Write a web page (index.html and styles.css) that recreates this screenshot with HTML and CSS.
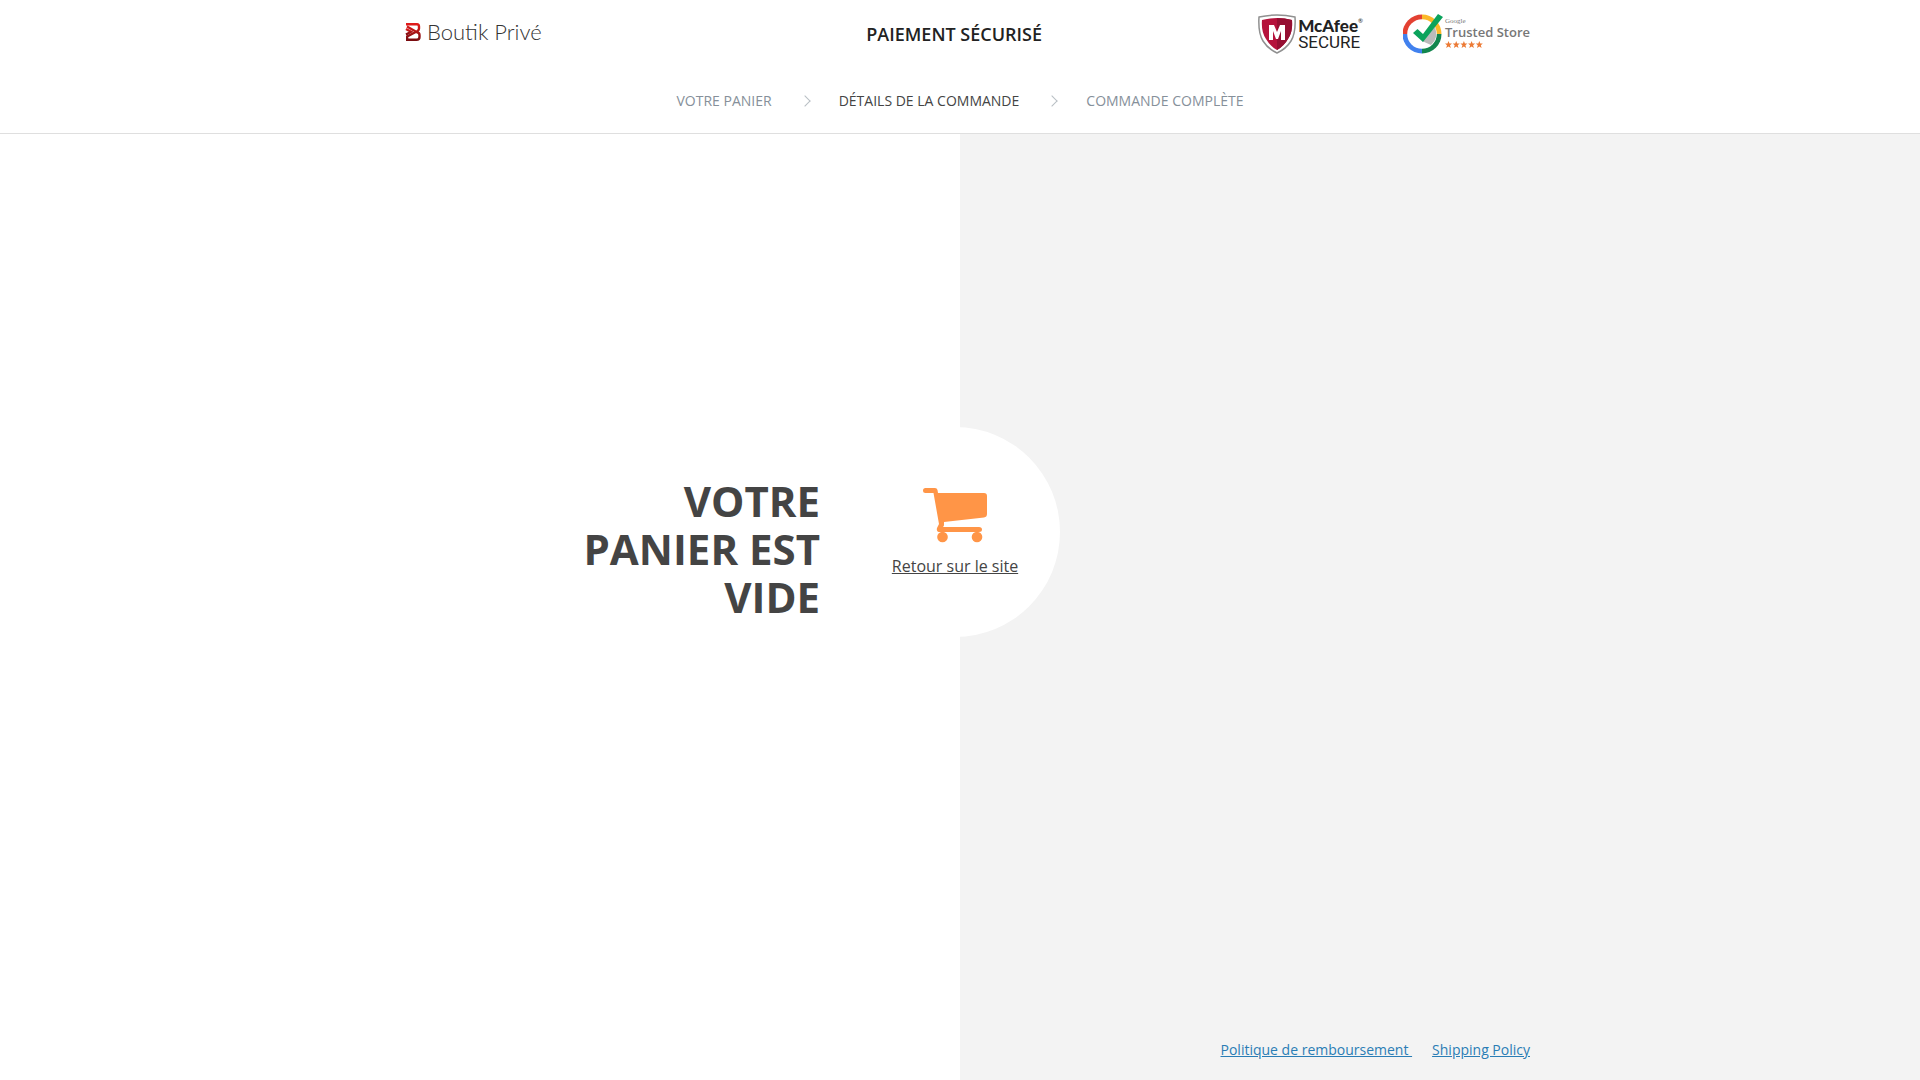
FILE: index.html
```html
<!DOCTYPE html>
<html lang="fr">
<head>
<meta charset="utf-8">
<meta name="viewport" content="width=device-width, initial-scale=1">
<title>Boutik Privé - Paiement sécurisé</title>
<link rel="stylesheet" href="styles.css">
</head>
<body>
<header class="header">
  <div class="container header-top">
    <a class="logo" href="#">
      <svg class="logo-mark" viewBox="0 0 16 20" aria-hidden="true">
        <defs><linearGradient id="red" x1="0" y1="0" x2="0" y2="1"><stop offset="0" stop-color="#e01b1b"/><stop offset="1" stop-color="#7a0c10"/></linearGradient></defs>
        <g fill="none" stroke="url(#red)" stroke-width="2.400">
          <path d="M1 2.200H12Q14 2.200 14 4.500V6.500Q14 8 12.500 9L2.200 14.500V17.800H11.500Q14.500 17.800 14.500 15V13Q14.500 10.500 12 10.200L2 4.500"/>
          <path d="M1 7L6 9.800L1 12.500"/>
        </g>
      </svg>
      <span>Boutik Privé</span>
    </a>
    <h1 class="title">PAIEMENT SÉCURISÉ</h1>
    <div class="badges">
      <div class="badge">
        <svg class="shield" viewBox="0 0 38 40" aria-hidden="true">
          <path d="M1 3Q19-1 37 3Q38 19 33 27Q28 35 19 39Q10 35 5 27Q0 19 1 3Z" fill="#fff" stroke="#909090" stroke-width="1.500"/>
          <path d="M4 6Q19 2 34 6Q35 18 30 25Q26 32 19 36Q12 32 8 25Q3 18 4 6Z" fill="#b5123b"/>
          <path d="M19 4Q27 4 34 6Q35 18 30 25Q26 32 19 36Z" fill="#950f32"/>
          <path d="M11 26V11H16L19 18L22 11H27V26H23V17L20 25H18L15 17V26Z" fill="#fff"/>
        </svg>
        <div class="mcafee"><span class="mcafee-name">McAfee<small>®</small></span><span>SECURE</span></div>
      </div>
      <div class="badge">
        <svg class="trust-mark" viewBox="1 0 40 40" aria-hidden="true">
          <path d="M20 .500A19.500 19.500 0 0 1 39.500 20H20Z" fill="#fbb829"/>
          <path d="M39.500 20A19.500 19.500 0 0 1 20 39.500V20Z" fill="#12864e"/>
          <path d="M20 39.500A19.500 19.500 0 0 1 .500 20H20Z" fill="#4181ee"/>
          <path d="M.500 20A19.500 19.500 0 0 1 20 .500V20Z" fill="#e34132"/>
          <circle cx="20" cy="20" r="14.800" fill="#fff"/>
          <path d="M20 27L33 13Q37 24 29 31Z" fill="#bbb"/>
          <path d="M11 19L15.500 15L21 20L36 0L41 3L21 28Z" fill="#0ba35c"/>
        </svg>
        <div class="trust"><small>Google</small><span class="trust-name">Trusted Store</span>
          <svg class="stars" viewBox="0 0 38 7" aria-label="5 étoiles">
            <defs><path id="star" d="M3.500 0L4.500 2.500H7L5 4.200L5.800 7L3.500 5.400L1.200 7L2 4.200L0 2.500H2.500Z"/></defs>
            <g fill="#ec7a35"><use href="#star"/><use href="#star" x="7.700"/><use href="#star" x="15.400"/><use href="#star" x="23.100"/><use href="#star" x="30.800"/></g>
          </svg>
        </div>
      </div>
    </div>
  </div>
  <ol class="steps">
    <li>VOTRE PANIER</li>
    <li class="current">DÉTAILS DE LA COMMANDE</li>
    <li>COMMANDE COMPLÈTE</li>
  </ol>
</header>
<main class="main">
  <section class="empty">
    <h2 class="empty-title">VOTRE PANIER EST VIDE</h2>
    <div class="circle">
      <svg class="cart" viewBox="0 0 66 56" aria-hidden="true" fill="#ff9547">
        <path d="M3.500 1H13Q15 1 15.500 3L16 6H62Q65 6 65 9V27Q65 30 62 30.500L22 35V38Q22 39 21 40H57Q60 40 60 42.500T57 45H18Q14 45 15 41L17 37L11.500 6H3.500Q1 6 1 3.500T3.500 1Z"/>
        <circle cx="20.500" cy="50" r="5.300"/><circle cx="55" cy="50" r="5.300"/>
      </svg>
      <a class="back" href="#">Retour sur le site</a>
    </div>
  </section>
  <footer class="container footer">
    <a href="#">Politique de remboursement&nbsp;</a>
    <a href="#">Shipping Policy</a>
  </footer>
</main>
</body>
</html>
```
FILE: styles.css
```css
* { box-sizing: border-box; }

body {
  display: flex;
  flex-direction: column;
  min-height: 100vh;
  margin: 0;
  background: #fff;
  color: #444;
  font: 14px/20px "Open Sans", sans-serif;
}

.container {
  width: 100%;
  max-width: 1140px;
  margin: 0 auto;
  padding-left: 15px;
}

.header { border-bottom: 1px solid #dfdfdf; }

.header-top {
  display: grid;
  grid-template-columns: 41% 1fr auto;
  align-items: center;
  height: 68px;
}

.logo {
  display: flex;
  align-items: center;
  gap: 6px;
  padding-bottom: 4px;
  color: #333;
  font: 300 22px/24px Lato, sans-serif;
  text-decoration: none;
}

.logo-mark { width: 16px; height: 20px; }

.title {
  margin: 0;
  color: #222;
  font-size: 18px;
  font-weight: 600;
  line-height: 24px;
}

.badges { display: flex; gap: 40px; }
.badge { display: flex; align-items: center; gap: 2px; }
.shield { width: 38px; height: 40px; }
.trust-mark { width: 40px; height: 40px; }

.mcafee {
  display: flex;
  flex-direction: column;
  color: #222;
  font: 17px/17px Roboto, sans-serif;
}

.mcafee-name {
  display: flex;
  font: 900 17px/17px Lato, sans-serif;
}

.mcafee small { font: 6px/8px Lato, sans-serif; }

.trust {
  display: flex;
  flex-direction: column;
  padding-bottom: 2px;
  color: #777;
}

.trust small { font: 7px/7px "Liberation Serif", serif; }
.trust-name { font-size: 13px; font-weight: 600; line-height: 14px; }
.stars { width: 38px; height: 7px; margin-top: 2px; }

.steps {
  display: flex;
  justify-content: center;
  margin: 0;
  padding: 23px 0 22px;
  color: #86909a;
  list-style: none;
}

.steps li { display: flex; align-items: center; }
.steps .current { color: #444; }

.steps li + li::before {
  content: "";
  width: 7px;
  height: 7px;
  margin: 0 30px 0 29px;
  border: solid #b8bec4;
  border-width: 1px 1px 0 0;
  transform: rotate(45deg);
}

.main {
  display: flex;
  flex: 1;
  flex-direction: column;
  background: linear-gradient(to right, #fff 50%, #f3f3f3 50%);
}

.empty {
  display: grid;
  flex: 1;
  grid-template-columns: 1fr 210px 1fr;
  align-items: center;
  gap: 30px;
  padding-right: 10px;
}

.empty-title {
  justify-self: end;
  max-width: 250px;
  margin: 0;
  padding-top: 34px;
  font-size: 42px;
  font-weight: 700;
  line-height: 48px;
  text-align: right;
}

.circle {
  display: flex;
  flex-direction: column;
  align-items: center;
  justify-content: center;
  gap: 12px;
  aspect-ratio: 1;
  border-radius: 50%;
  background: #fff;
}

.cart { width: 66px; height: 56px; }
.back { color: #444; font-size: 16px; line-height: 22px; }

.footer {
  display: flex;
  align-items: flex-end;
  justify-content: flex-end;
  gap: 20px;
  height: 150px;
  padding-bottom: 20px;
}

.footer a { color: #2a7db5; }
```
